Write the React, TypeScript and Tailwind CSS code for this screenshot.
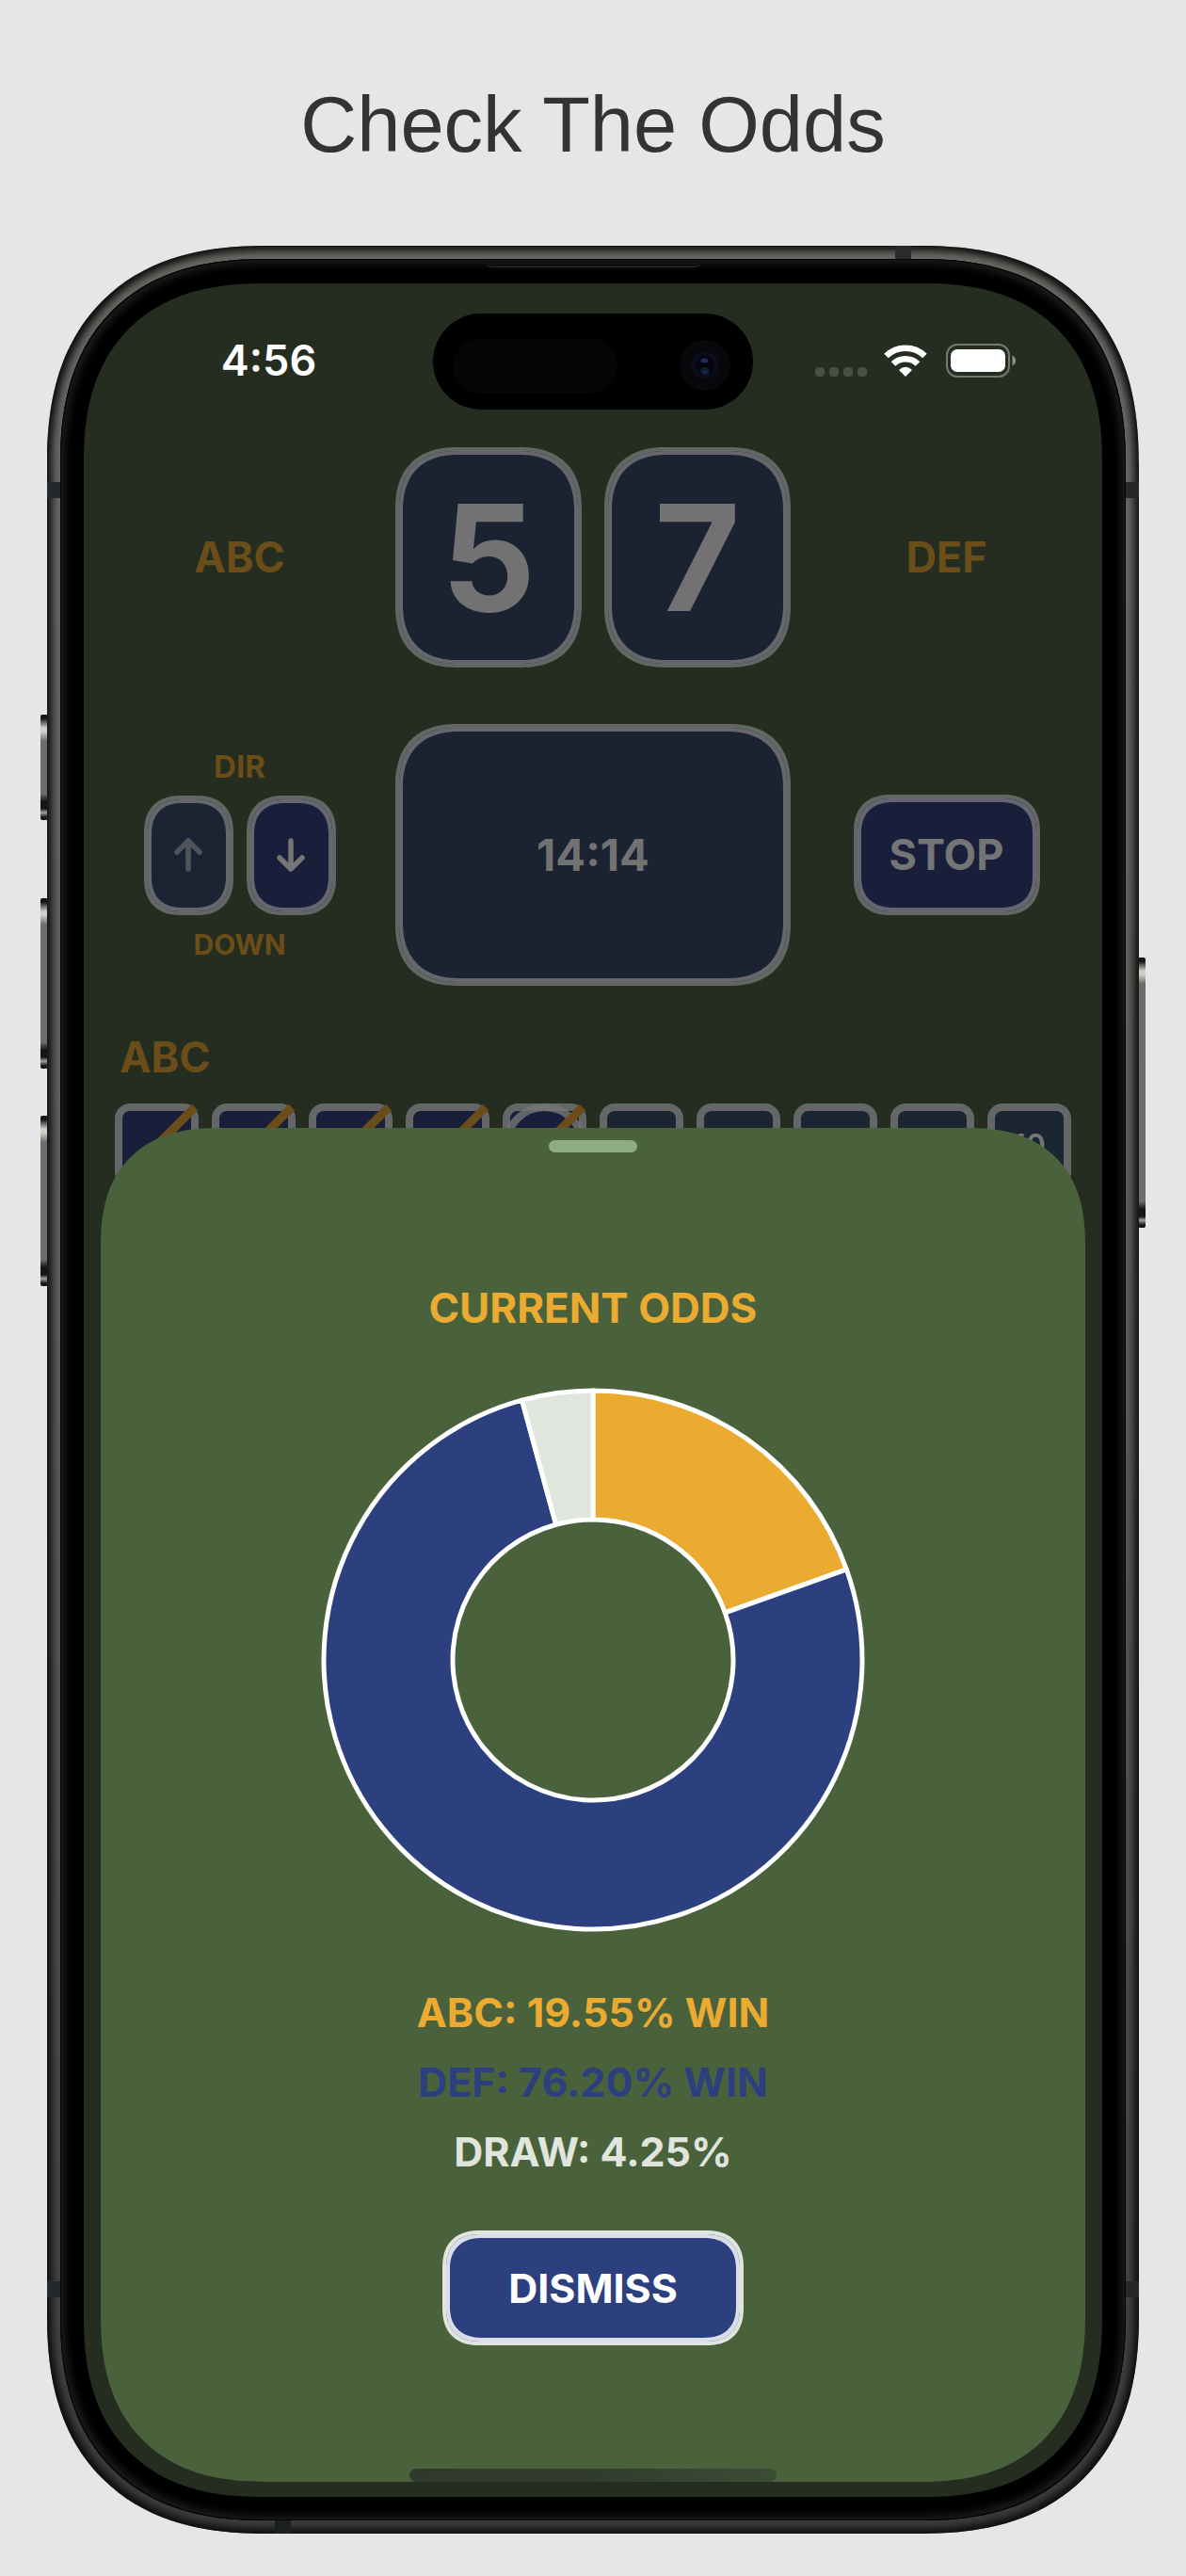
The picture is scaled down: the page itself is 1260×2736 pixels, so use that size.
import { useState } from 'react';

interface Odds {
  id: string;
  text: string;
  value: number;
  color: string;
  textClass: string;
}

const odds: Odds[] = [
  { id: 'abc', text: 'ABC: 19.55% WIN', value: 19.55, color: '#ebaa30', textClass: 'text-[#ebaa30]' },
  { id: 'def', text: 'DEF: 76.20% WIN', value: 76.2, color: '#2c3f7e', textClass: 'text-[#2c3f7e]' },
  { id: 'draw', text: 'DRAW: 4.25%', value: 4.25, color: '#e0e5dd', textClass: 'text-[#e0e5dd]' },
];

const tiles = [1, 2, 3, 4, 5, 6, 7, 8, 9, 10];
const struck = [1, 2, 3, 4, 5];
const current = 5;

const SMOOTH = '[corner-shape:superellipse(1.25)]';

const SIDE_BUTTON =
  'absolute w-[8px] rounded-[2px] bg-[linear-gradient(to_bottom,#151515_4px,#d2cec8_14px,#d2cec8_18px,#6f6d69_28px,#6f6d69_calc(100%-28px),#151515_calc(100%-20px),#151515_calc(100%-12px),#a8a5a0_calc(100%-8px),#151515_calc(100%-3px))]';

// point on a circle around (290, 290), percent measured clockwise from the top
const pointAt = (percent: number, radius: number) => {
  const angle = (percent / 100) * Math.PI * 2;
  return `${290 + radius * Math.sin(angle)} ${290 - radius * Math.cos(angle)}`;
};

const slicePath = (start: number, end: number) => {
  const large = end - start > 50 ? 1 : 0;
  return [
    `M ${pointAt(start, 286)}`,
    `A 286 286 0 ${large} 1 ${pointAt(end, 286)}`,
    `L ${pointAt(end, 149)}`,
    `A 149 149 0 ${large} 0 ${pointAt(start, 149)}`,
    'Z',
  ].join(' ');
};

const OddsChart = () => {
  let start = 0;
  return (
    <svg viewBox="0 0 580 580" className="mt-[57px] size-[580px]" role="img" aria-label="Current odds">
      {odds.map((item) => {
        const from = start;
        start += item.value;
        return (
          <path
            key={item.id}
            d={slicePath(from, start)}
            fill={item.color}
            stroke="#ffffff"
            strokeWidth="5"
            strokeLinejoin="round"
          />
        );
      })}
    </svg>
  );
};

const Arrow = ({ path }: { path: string }) => (
  <svg viewBox="0 0 30 36" className="h-[36px] w-[30px]" aria-hidden="true">
    <path d={path} fill="none" stroke="currentColor" strokeWidth="5.500" strokeLinecap="round" strokeLinejoin="round" />
  </svg>
);

const StatusBar = () => (
  <div className="grid h-[174px] grid-cols-[1fr_340px_1fr] items-start">
    <span className="pt-[55px] pl-[22px] text-center text-[45px] leading-[54px] font-semibold text-white">
      4:56
    </span>
    <div className="mt-8 flex h-[102px] items-center justify-between rounded-full bg-black pt-2 pr-[24px] pl-[21px]">
      <div className="h-[59px] w-[175px] rounded-full bg-[#050505]" />
      <svg viewBox="0 0 54 54" className="size-[54px]" aria-hidden="true">
        <circle cx="27" cy="27" r="27" fill="#080709" />
        <circle cx="27" cy="27" r="14.5" fill="#0c0c1a" />
        <circle cx="27" cy="27" r="10" fill="#04040f" />
        <ellipse cx="26.500" cy="22" rx="4" ry="2.500" fill="#28285c" />
        <ellipse cx="27" cy="33" rx="5" ry="4" fill="#06222c" />
        <circle cx="27.500" cy="34.500" r="2" fill="#2b1a5c" />
      </svg>
    </div>
    <div className="flex items-start pt-[64px] pl-[66px]">
      <div className="mt-[25px] flex gap-[5px]">
        {[0, 1, 2, 3].map((dot) => (
          <span key={dot} className="size-[10px] rounded-[4px] bg-[#475141]" />
        ))}
      </div>
      <svg viewBox="0 0 46 34" className="mt-px ml-[18px] h-[34px] w-[46px]" aria-hidden="true">
        <path d="M2.500 12 A29.500 29.500 0 0 1 43.500 12" fill="none" stroke="#fff" strokeWidth="6.500" />
        <path d="M10 20.500 A18.500 18.500 0 0 1 36 20.500" fill="none" stroke="#fff" strokeWidth="6.500" />
        <path d="M23 34 L16 27 Q23 20.500 30 27 Z" fill="#fff" />
      </svg>
      <svg viewBox="0 0 75 36" className="ml-[20px] h-[36px] w-[75px]" aria-hidden="true">
        <rect x="1" y="1" width="66" height="34" rx="11" fill="none" stroke="#727a6e" strokeWidth="2" />
        <rect x="5" y="6" width="58" height="24" rx="7" fill="#fff" />
        <path d="M70.500 12.500 Q74 14 74 18 Q74 22 70.500 23.500 Z" fill="#8b9287" />
      </svg>
    </div>
  </div>
);

const ScoreCard = ({ value }: { value: number }) => (
  <div
    className={`${SMOOTH} flex h-[234px] w-[198px] items-center justify-center rounded-[66px] border-4 border-[#646664] bg-[#1b2333] text-[157px] leading-none font-bold text-[#727272] shadow-[inset_0_0_0_4px_#66676c]`}
  >
    {value}
  </div>
);

const Scoreboard = () => {
  const [direction, setDirection] = useState<'up' | 'down'>('down');

  return (
    <div className="flex flex-col [grid-area:1/1]">
      <StatusBar />
      <div className="grid grid-cols-[1fr_420px_1fr] items-center text-center text-[45px] leading-[54px] font-bold text-[#6a4d18]">
        <span>ABC</span>
        <div className="flex justify-between">
          <ScoreCard value={5} />
          <ScoreCard value={7} />
        </div>
        <span>DEF</span>
      </div>

      <div className="mt-[60px] grid grid-cols-[1fr_420px_1fr] items-center text-center">
        <div className="flex flex-col items-center font-bold text-[#6a4d18]">
          <span className="text-[33px] leading-[38px]">DIR</span>
          <div className="my-[12px] flex gap-[14px]">
            <button
              type="button"
              aria-label="Up"
              onClick={() => setDirection('up')}
              aria-pressed={direction === 'up'}
              className={`${SMOOTH} flex h-[127px] w-[95px] items-center justify-center rounded-[40px] border-4 border-[#646664] bg-[#1c2434] text-[#505559] shadow-[inset_0_0_0_4px_#66676c]`}
            >
              <Arrow path="M15 33 V3 M3 15 L15 3 L27 15" />
            </button>
            <button
              type="button"
              aria-label="Down"
              onClick={() => setDirection('down')}
              aria-pressed={direction === 'down'}
              className={`${SMOOTH} flex h-[127px] w-[95px] items-center justify-center rounded-[40px] border-4 border-[#646664] bg-[#191f3a] text-[#757575] shadow-[inset_0_0_0_4px_#666672]`}
            >
              <Arrow path="M15 3 V33 M3 21 L15 33 L27 21" />
            </button>
          </div>
          <span className="text-[30px] leading-[38px]">DOWN</span>
        </div>
        <div
          className={`${SMOOTH} flex h-[278px] items-center justify-center rounded-[66px] border-4 border-[#646664] bg-[#1b2333] text-[47px] font-bold text-[#727272] shadow-[inset_0_0_0_4px_#66676c]`}
        >
          14:14
        </div>
        <div>
          <button
            type="button"
            className={`${SMOOTH} h-[128px] w-[198px] rounded-[40px] border-4 border-[#646664] bg-[#191f3a] text-[45px] font-bold text-[#757575] shadow-[inset_0_0_0_4px_#666672]`}
          >
            STOP
          </button>
        </div>
      </div>

      <h2 className="mt-[49px] px-[38px] text-[45px] leading-[54px] font-bold text-[#6a4d18]">ABC</h2>
      <div className="mt-[22px] flex justify-between px-[33px]">
        {tiles.map((tile) => (
          <div
            key={tile}
            className={
              struck.includes(tile)
                ? 'relative h-[89px] w-[89px] rounded-[16px] border-8 border-[#656668] bg-[#191f3a]'
                : 'relative h-[89px] w-[89px] rounded-[16px] border-8 border-[#656668] bg-[#1c2633]'
            }
          >
            {tile === current && (
              <div className="absolute -inset-2 rounded-full border-8 border-[#757575]/80" />
            )}
            {struck.includes(tile) && (
              <svg viewBox="0 0 89 89" className="absolute -inset-2 size-[89px]" aria-hidden="true">
                <path d="M5 84 L85 4" stroke="#6a4d18" strokeWidth="9" />
              </svg>
            )}
            {tile === 10 && (
              <span className="flex h-full items-center justify-center text-[32px] font-semibold text-[#757575]">
                {tile}
              </span>
            )}
          </div>
        ))}
      </div>
    </div>
  );
};

const OddsSheet = ({ onDismiss }: { onDismiss: () => void }) => (
  <section
    className={`${SMOOTH} relative mx-[18px] mt-[897px] mb-4 flex flex-col items-center rounded-t-[124px] rounded-b-[176px] bg-[#49623c] pt-[13px] [grid-area:1/1]`}
  >
    <div className="h-[13px] w-[94px] rounded-full bg-[#8fad85]" />
    <h2 className="mt-[138px] text-[44px] leading-[54px] font-bold text-[#ebaa30]">CURRENT ODDS</h2>
    <OddsChart />
    <ul className="mt-[47px] text-center text-[43px] leading-[74px] font-bold">
      {odds.map((item) => (
        <li key={item.id} className={item.textClass}>
          {item.text}
        </li>
      ))}
    </ul>
    <button
      type="button"
      onClick={onDismiss}
      className={`${SMOOTH} mt-[47px] h-[122px] w-[320px] rounded-[40px] border-4 border-[#e0e5dd] bg-[#2c3f7e] text-[43px] font-bold text-white shadow-[inset_0_0_0_4px_#dadeea]`}
    >
      DISMISS
    </button>
    <div className="mt-[131px] h-[14px] w-[390px] rounded-full bg-linear-to-r from-[#30392d] via-[#323c2d] to-[#3c4d34]" />
  </section>
);

export default function App() {
  const [open, setOpen] = useState(true);

  return (
    <main className="min-h-screen bg-[#e6e6e6] px-[50px] pb-[44px] font-[Inter,sans-serif]">
      <h1 className="pt-[87px] pb-[82px] text-center font-['Liberation_Sans',sans-serif] text-[83px] leading-[92px] text-[#333333]">
        Check The Odds
      </h1>

      <div className="relative">
        {/* side buttons */}
        <div className={`${SIDE_BUTTON} top-[498px] -left-[7px] h-[112px]`} />
        <div className={`${SIDE_BUTTON} top-[693px] -left-[7px] h-[181px]`} />
        <div className={`${SIDE_BUTTON} top-[924px] -left-[7px] h-[181px]`} />
        <div className={`${SIDE_BUTTON} top-[756px] -right-[7px] h-[287px]`} />

        <div
          className={`${SMOOTH} relative rounded-[232px] bg-linear-to-b from-[#6b6965] via-[#5c5c5c] to-[#3c3c3c] p-[14px] shadow-[inset_0_0_9px_5px_#0c0c0c]`}
        >
          {/* antenna bands */}
          <div className="absolute top-[251px] left-0 h-[17px] w-full bg-[#24282a]" />
          <div className="absolute bottom-[251px] left-0 h-[17px] w-full bg-[#24282a]" />
          <div className="absolute top-0 right-[242px] h-[14px] w-[17px] bg-[#2a2a2a]" />
          <div className="absolute bottom-0 left-[242px] h-[14px] w-[17px] bg-[#1c1f20]" />

          <div
            className={`${SMOOTH} relative rounded-[218px] bg-black px-[25px] pt-[26px] pb-[25px] shadow-[inset_0_0_0_1px_#050505,inset_0_0_8px_5px_#1c1c1c]`}
          >
            <div className="absolute inset-x-0 top-[2px] mx-auto h-[7px] w-[229px] rounded-b-[6px] border-b border-[#2e2e2e] bg-[#101010]" />
            <div className={`${SMOOTH} grid items-start overflow-hidden rounded-[190px] bg-[#242d1f]`}>
              <Scoreboard />
              {open && <OddsSheet onDismiss={() => setOpen(false)} />}
            </div>
          </div>
        </div>
      </div>
    </main>
  );
}
